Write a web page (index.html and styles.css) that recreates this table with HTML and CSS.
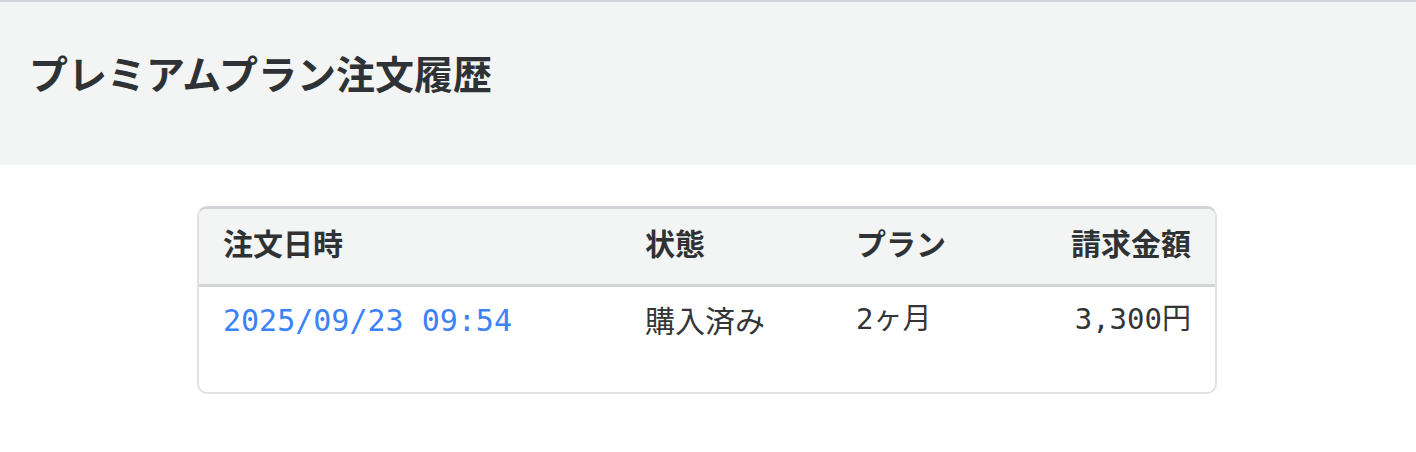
FILE: index.html
```html
<!DOCTYPE html>
<html lang="ja">
<head>
<meta charset="utf-8">
<link rel="stylesheet" href="styles.css">
</head>
<body>
<header class="page-head">
  <h1 class="title">プレミアムプラン注文履歴</h1>
</header>
<main class="content">
  <div class="card">
    <table class="orders">
      <colgroup>
        <col class="c-date">
        <col class="c-status">
        <col class="c-plan">
        <col class="c-amount">
      </colgroup>
      <thead>
        <tr>
          <th>注文日時</th>
          <th>状態</th>
          <th>プラン</th>
          <th class="right">請求金額</th>
        </tr>
      </thead>
      <tbody>
        <tr>
          <td><a class="date" href="#">2025/09/23 09:54</a></td>
          <td>購入済み</td>
          <td class="mono">2ヶ月</td>
          <td class="right mono">3,300円</td>
        </tr>
      </tbody>
    </table>
  </div>
</main>
</body>
</html>
```

FILE: styles.css
```css
html, body {
  margin: 0;
  padding: 0;
  background: #ffffff;
}
body {
  font-family: "Noto Sans CJK JP", "Noto Sans", sans-serif;
  color: #2f3234;
}
.page-head {
  border-top: 2px solid #d3d4d8;
  background: #f3f5f4;
  height: 165px;
  display: flex;
  align-items: center;
  padding: 0 29px 22px;
  box-sizing: border-box;
}
.title {
  margin: 0;
  font-size: 39px;
  font-weight: 700;
  line-height: 1.2;
  color: #2f3234;
}
.content {
  display: flex;
  justify-content: center;
  padding-top: 41px;
}
.card {
  width: 1020px;
  margin-right: 2px;
  box-sizing: border-box;
  border: 2px solid #e1e2e4;
  border-top: 3px solid #d3d4d8;
  border-radius: 10px;
  overflow: hidden;
  padding-bottom: 36px;
}
.orders {
  width: 100%;
  border-collapse: collapse;
  table-layout: fixed;
  font-size: 30px;
  line-height: 45px;
}
.c-date { width: 422px; }
.c-status { width: 211px; }
.c-amount { width: 173px; }
.orders th {
  background: #f3f5f4;
  text-align: left;
  font-weight: 700;
  padding: 11px 24px 19px;
  border-bottom: 3px solid #d3d4d8;
  color: #2f3234;
}
.orders td {
  padding: 9px 24px 13px;
  color: #333537;
  white-space: nowrap;
}
.orders .right {
  text-align: right;
  padding-right: 24px;
}
.mono, .date {
  font-family: "DejaVu Sans Mono", "Noto Sans CJK JP", monospace;
}
.date {
  color: #3b82f6;
  text-decoration: none;
  font-size: 30px;
}
.orders td.mono {
  font-size: 29px;
}
```
